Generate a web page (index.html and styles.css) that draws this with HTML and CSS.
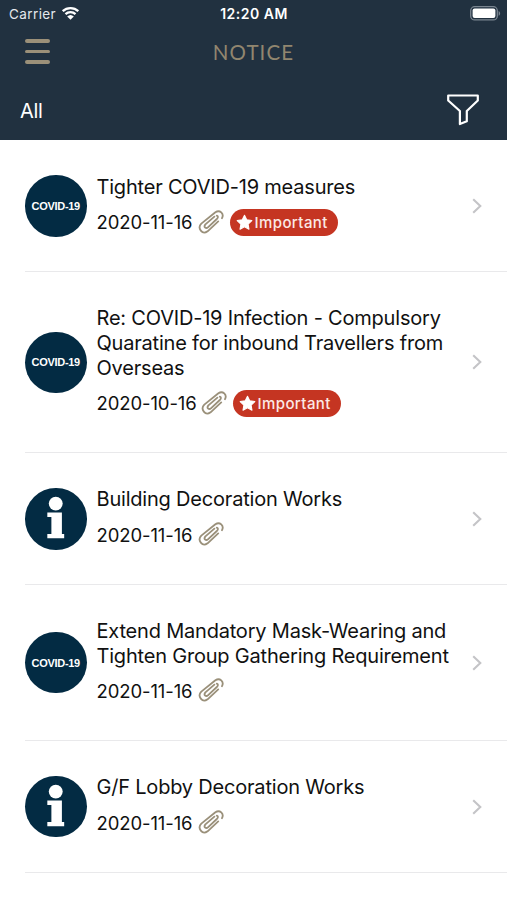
FILE: index.html
```
<!DOCTYPE html>
<html lang="en">
  <head>
    <meta charset="utf-8">
    <title>Notice</title>
    <link rel="stylesheet" href="styles.css">
  </head>
  <body>
    <svg class="symbols" aria-hidden="true">
      <symbol id="clip" viewBox="0 0 26 24">
        <path d="M24 8.2C26.4 3.6 21.8-.6 17.4 2.3L3.3 13.6C-1 18 4.2 25.4 9.6 21.3L20.2 11.4M16.4 6.6L7.4 14.4C5.2 17.2 8 19.2 10.2 17.1L18.8 9C20.4 7.4 20.2 6 18.8 5.6"/>
      </symbol>
      <symbol id="star" viewBox="0 0 16 16">
        <path d="M8 1.2l2.1 4.3 4.8.7-3.5 3.4.8 4.7L8 12.1l-4.2 2.2.8-4.7L1.1 6.2l4.8-.7z"/>
      </symbol>
      <symbol id="arrow" viewBox="0 0 10 16">
        <path d="M1.2 1.2L8.3 8l-7.1 6.8"/>
      </symbol>
      <symbol id="info" viewBox="0 0 62 62">
        <circle cx="31" cy="15.7" r="7"/>
        <path d="M22.5 24.7h14.7v21.6h2.3v4.4h-17v-4.4h4.1V29.2h-4.1z"/>
      </symbol>
    </svg>

    <header>
      <div class="status">
        <div class="carrier">
          Carrier
          <svg class="wifi" viewBox="0 0 18 14">
            <path d="M1.2 5.2a11.2 11.2 0 0 1 15.6 0M4 8.2a7.2 7.2 0 0 1 10 0"/>
            <path class="dot" d="M9 13.8L5.7 10.5a4.8 4.8 0 0 1 6.6 0z"/>
          </svg>
        </div>
        <div class="time">12:20 AM</div>
        <svg class="battery" viewBox="0 0 31 15">
          <rect class="shell" x=".7" y=".7" width="26.6" height="13.2" rx="4"/>
          <rect class="charge" x="2.6" y="2.6" width="22.8" height="9.4" rx="2"/>
          <path class="cap" d="M28.6 5c2 .8 2 4 0 4.8z"/>
        </svg>
      </div>
      <div class="navbar">
        <div class="menu"><span></span><span></span><span></span></div>
        <h1>NOTICE</h1>
      </div>
      <div class="filter">
        <span>All</span>
        <svg class="funnel" viewBox="0 0 32 32">
          <path d="M1.2 1.5h29.6v5L19.8 17v10.3l-6.9 2.8V17L1.2 6.5z"/>
        </svg>
      </div>
    </header>

    <ul id="notices">
      <li>
        <div class="badge">COVID-19</div>
        <div class="content">
          <h2>Tighter COVID-19 measures</h2>
          <div class="meta">
            <span class="date">2020-11-16</span>
            <svg class="clip"><use href="#clip"/></svg>
            <span class="important"><svg class="star"><use href="#star"/></svg><span>Important</span></span>
          </div>
        </div>
        <svg class="arrow"><use href="#arrow"/></svg>
      </li>
      <li>
        <div class="badge">COVID-19</div>
        <div class="content">
          <h2>Re: COVID-19 Infection - Compulsory<br>Quaratine for inbound Travellers from<br>Overseas</h2>
          <div class="meta">
            <span class="date wide">2020-10-16</span>
            <svg class="clip"><use href="#clip"/></svg>
            <span class="important"><svg class="star"><use href="#star"/></svg><span>Important</span></span>
          </div>
        </div>
        <svg class="arrow"><use href="#arrow"/></svg>
      </li>
      <li>
        <div class="badge"><svg class="info"><use href="#info"/></svg></div>
        <div class="content">
          <h2>Building Decoration Works</h2>
          <div class="meta">
            <span class="date">2020-11-16</span>
            <svg class="clip"><use href="#clip"/></svg>
          </div>
        </div>
        <svg class="arrow"><use href="#arrow"/></svg>
      </li>
      <li>
        <div class="badge">COVID-19</div>
        <div class="content">
          <h2>Extend Mandatory Mask-Wearing and<br>Tighten Group Gathering Requirement</h2>
          <div class="meta">
            <span class="date">2020-11-16</span>
            <svg class="clip"><use href="#clip"/></svg>
          </div>
        </div>
        <svg class="arrow"><use href="#arrow"/></svg>
      </li>
      <li>
        <div class="badge"><svg class="info"><use href="#info"/></svg></div>
        <div class="content">
          <h2>G/F Lobby Decoration Works</h2>
          <div class="meta">
            <span class="date">2020-11-16</span>
            <svg class="clip"><use href="#clip"/></svg>
          </div>
        </div>
        <svg class="arrow"><use href="#arrow"/></svg>
      </li>
    </ul>
  </body>
</html>
```
FILE: styles.css
```
* { box-sizing: border-box; }
body { margin: 0; background: #fff; color: #111; font-family: Inter, Roboto, "Liberation Sans", sans-serif; }
svg { display: block; flex: none; }
.symbols { width: 0; height: 0; position: absolute; }

header { height: 140px; background: #213140; color: #fff; }

.status { display: grid; grid-template-columns: 1fr auto 1fr; align-items: center; height: 27px; padding: 0 6px 0 9px; font-size: 13.5px; }
.carrier { display: flex; align-items: center; gap: 6px; color: #e4e8ec; letter-spacing: 0.4px; }
.time { margin-right: 2px; font-weight: 600; font-size: 14px; letter-spacing: 0.5px; }
.wifi { width: 19px; height: 14px; margin: -1px 0 0 -1px; fill: none; stroke: #fff; stroke-width: 2.3; }
.wifi .dot { fill: #fff; stroke: none; }
.battery { width: 31px; height: 15px; justify-self: end; }
.shell { fill: none; stroke: #7a8590; stroke-width: 1.3; }
.charge { fill: #fff; }
.cap { fill: #7a8590; }

.navbar { display: grid; grid-template-columns: 1fr auto 1fr; align-items: center; height: 49px; padding: 0 25px; }
.menu { display: flex; flex-direction: column; gap: 7px; }
.menu span { width: 25px; height: 3.5px; border-radius: 2px; background: #9b9079; }
h1 { margin: 0; font: 400 20.5px/24px Lato, sans-serif; letter-spacing: 1.1px; color: #91866f; }

.filter { display: flex; align-items: center; justify-content: space-between; height: 64px; padding: 4px 28px 0 20px; font-size: 20px; letter-spacing: -0.3px; }
.filter span { margin-top: 2px; }
.funnel { width: 32px; height: 32px; fill: none; stroke: #fff; stroke-width: 2.2; stroke-linejoin: round; }

#notices { list-style: none; margin: 0; padding: 0.7px 0 0 25px; }
#notices li { display: flex; align-items: center; padding: 34.2px 25px 33.7px 0; border-bottom: 1.5px solid #e9e9eb; }
.badge { display: flex; flex: none; align-items: center; justify-content: center; width: 61.5px; height: 61.5px; margin-right: 10px; border-radius: 50%; background: #032b43; color: #fff; font: bold 11px "Liberation Sans", Arial, sans-serif; letter-spacing: -0.3px; }
.info { width: 61.5px; height: 61.5px; fill: #fff; }
.content { flex: 1; white-space: nowrap; }
h2 { margin: 0; font-size: 20px; font-weight: 400; line-height: 24.7px; letter-spacing: -0.2px; }
.meta { display: flex; align-items: center; height: 30px; margin-top: 7.6px; margin-bottom: 0.4px; }
.date { width: 96px; font-size: 18.5px; letter-spacing: -0.1px; }
.date.wide { width: 99px; }
.clip { width: 26px; height: 24px; margin: -1px 6px 0 5px; fill: none; stroke: #9a907a; stroke-width: 1.8; stroke-linecap: round; stroke-linejoin: round; }
.important { display: flex; align-items: center; gap: 2px; width: 108px; height: 27px; padding-left: 6px; border-radius: 14px; background: #c53522; color: #fbe9e6; font-size: 15px; font-weight: 500; letter-spacing: 0.4px; }
.star { width: 17px; height: 17px; fill: #fff; stroke: #fff; stroke-width: 1; stroke-linejoin: round; }
.arrow { width: 10px; height: 16px; fill: none; stroke: #c4c4c7; stroke-width: 2.1; }
```
